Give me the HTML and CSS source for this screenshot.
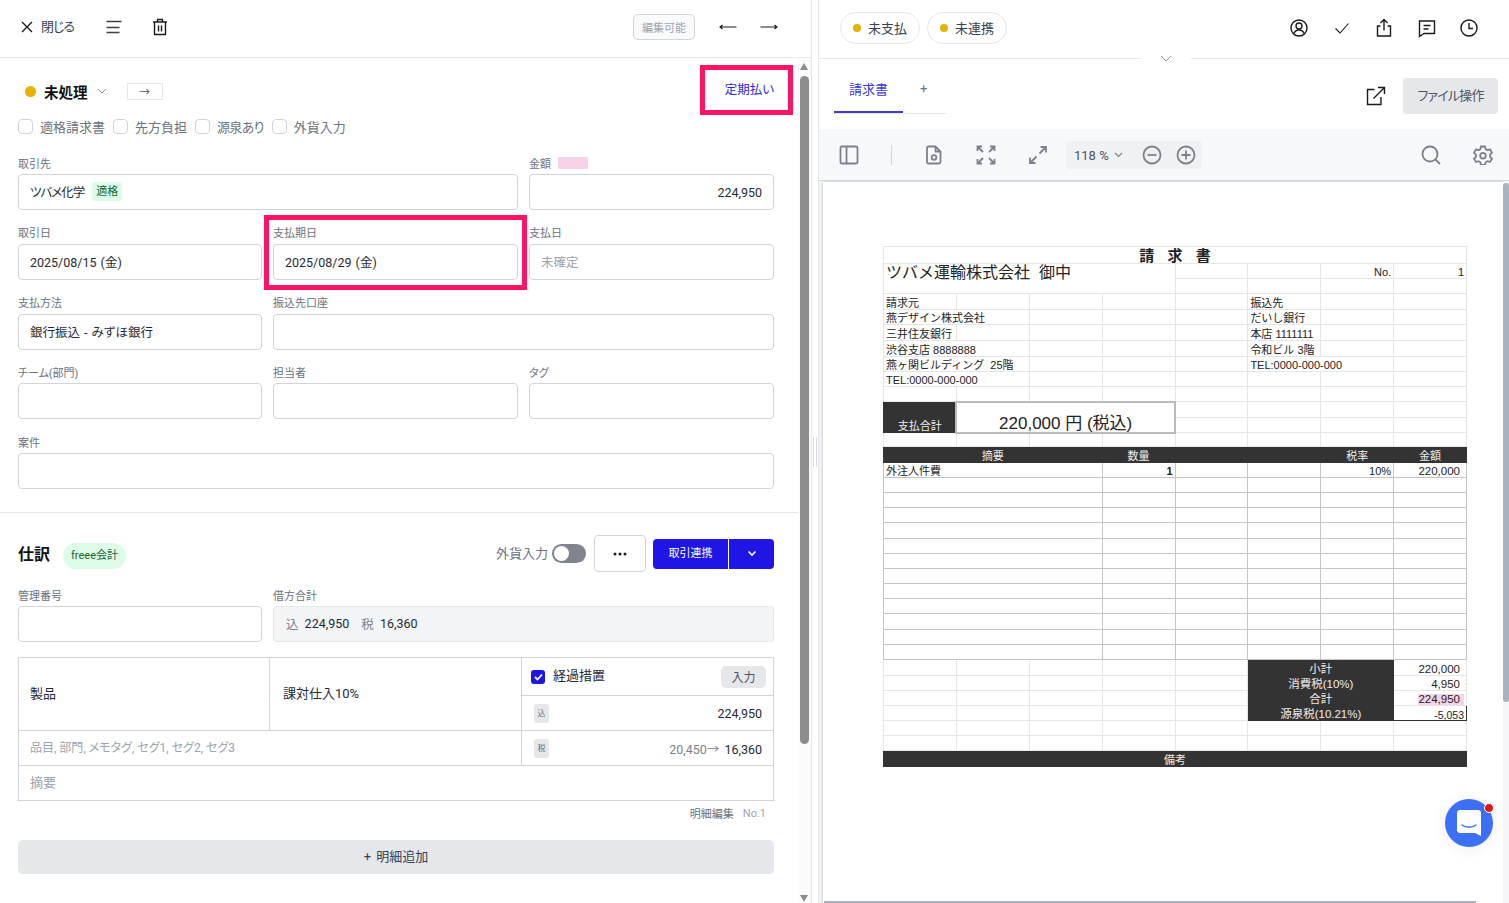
FILE: index.html
```html
<!DOCTYPE html>
<html lang="ja">
<head>
    <meta charset="UTF-8">
    <meta name="viewport" content="width=device-width, initial-scale=1.0">
    <title>請求書</title>
    <link rel="stylesheet" href="styles.css">
</head>
<body>
    <div class="app">
        <!-- left: form pane -->
        <section class="form-pane">
            <header class="form-bar">
                <button class="close-btn">
                    <svg width="14" height="14" viewBox="0 0 14 14" class="stroke-dark"><path d="M2 2l10 10M12 2L2 12"/></svg>
                    <span class="close-label">閉じる</span>
                </button>
                <svg class="lines-icon" width="16" height="14" viewBox="0 0 16 14"><path d="M0.500 1.500h15M0.500 7.500h13M0.500 12.500h13"/></svg>
                <svg class="trash-icon stroke-dark" width="16" height="18" viewBox="0 0 16 18"><path d="M1 4h14M5.500 4V1.500h5V4M2.500 4v12.500h11V4M6.500 7.500v6M9.500 7.500v6"/></svg>
                <button class="edit-btn">編集可能</button>
                <svg class="arrow-icon stroke-thin" width="18" height="8" viewBox="0 0 18 8"><path d="M17.500 4H1M3.500 2L1 4l2.500 2"/></svg>
                <svg class="arrow-icon stroke-thin" width="18" height="8" viewBox="0 0 18 8"><path d="M0.500 4H17M14.500 2L17 4l-2.500 2"/></svg>
            </header>

            <div class="form-scroll">
                <div class="form-body">
                    <div class="form-section">
                        <div class="status-row">
                            <span class="status-dot"></span>
                            <strong class="status-name">未処理</strong>
                            <svg class="stroke-gray" width="10" height="6" viewBox="0 0 10 6"><path d="M1 1l4 4 4-4"/></svg>
                            <span class="status-box">→</span>
                            <a class="recurring">定期払い</a>
                        </div>
                        <div class="check-row">
                            <label class="check"><span class="check-box"></span>適格請求書</label>
                            <label class="check"><span class="check-box"></span>先方負担</label>
                            <label class="check narrow"><span class="check-box"></span>源泉あり</label>
                            <label class="check"><span class="check-box"></span>外貨入力</label>
                        </div>

                        <div class="field-grid">
                            <div class="field span-2">
                                <div class="field-label">取引先</div>
                                <div class="input"><span class="kana">ツバメ化学</span><span class="tag">適格</span></div>
                            </div>
                            <div class="field">
                                <div class="field-label">金額<span class="pink-mark"></span></div>
                                <div class="input align-right">224,950</div>
                            </div>
                            <div class="field">
                                <div class="field-label">取引日</div>
                                <div class="input">2025/08/15 (金)</div>
                            </div>
                            <div class="field due-field">
                                <div class="field-label">支払期日</div>
                                <div class="input">2025/08/29 (金)</div>
                                <div class="highlight-due"></div>
                            </div>
                            <div class="field">
                                <div class="field-label">支払日</div>
                                <div class="input muted">未確定</div>
                            </div>
                            <div class="field">
                                <div class="field-label">支払方法</div>
                                <div class="input">銀行振込 - みずほ銀行</div>
                            </div>
                            <div class="field span-2">
                                <div class="field-label">振込先口座</div>
                                <div class="input"></div>
                            </div>
                            <div class="field">
                                <div class="field-label">チーム(部門)</div>
                                <div class="input"></div>
                            </div>
                            <div class="field">
                                <div class="field-label">担当者</div>
                                <div class="input"></div>
                            </div>
                            <div class="field">
                                <div class="field-label">タグ</div>
                                <div class="input"></div>
                            </div>
                            <div class="field span-3">
                                <div class="field-label">案件</div>
                                <div class="input"></div>
                            </div>
                        </div>
                    </div>

                    <div class="journal-section">
                        <div class="journal-head">
                            <h2 class="journal-title">仕訳</h2>
                            <span class="pill-tag">freee会計</span>
                            <span class="toggle-label">外貨入力</span>
                            <span class="toggle"><span class="toggle-knob"></span></span>
                            <button class="more-btn">
                                <svg width="14" height="4" viewBox="0 0 14 4"><circle cx="2" cy="2" r="1.500"/><circle cx="7" cy="2" r="1.500"/><circle cx="12" cy="2" r="1.500"/></svg>
                            </button>
                            <div class="link-btn">
                                <span class="link-main">取引連携</span>
                                <span class="link-drop">
                                    <svg width="10" height="7" viewBox="0 0 10 7"><path d="M1.500 1.500L5 5l3.500-3.500"/></svg>
                                </span>
                            </div>
                        </div>

                        <div class="field-grid journal-fields">
                            <div class="field">
                                <div class="field-label">管理番号</div>
                                <div class="input"></div>
                            </div>
                            <div class="field span-2">
                                <div class="field-label">借方合計</div>
                                <div class="input readonly"><span class="gray">込</span> 224,950 <span class="gray tax-gap">税</span> 16,360</div>
                            </div>
                        </div>

                        <div class="line-table">
                            <div class="cell cell-product"><span class="lift">製品</span></div>
                            <div class="cell cell-taxclass"><span class="lift">課対仕入10%</span></div>
                            <div class="cell cell-transition">
                                <span class="blue-check">
                                    <svg width="9" height="8" viewBox="0 0 9 8"><path d="M1 4l2.500 2.500L8 1.500"/></svg>
                                </span>
                                <span class="lift">経過措置</span>
                                <button class="enter-btn">入力</button>
                            </div>
                            <div class="cell cell-amount">
                                <span class="mini-badge">込</span>
                                <span class="num">224,950</span>
                            </div>
                            <div class="cell cell-items placeholder"><span class="lift">品目, 部門, メモタグ, セグ1, セグ2, セグ3</span></div>
                            <div class="cell cell-amount">
                                <span class="mini-badge">税</span>
                                <span class="num"><span class="gray">20,450</span><span class="thin-arrow">→</span> 16,360</span>
                            </div>
                            <div class="cell cell-memo placeholder"><span class="lift">摘要</span></div>
                        </div>

                        <div class="line-info">明細編集<span class="line-no">No.1</span></div>
                        <button class="add-line"><span class="lift">+ 明細追加</span></button>
                    </div>
                </div>

                <div class="scrollbar">
                    <span class="scroll-up"></span>
                    <span class="scroll-thumb"></span>
                    <span class="scroll-down"></span>
                </div>
                <div class="highlight-recurring"></div>
            </div>
        </section>

        <div class="splitter"><span class="splitter-grip"></span></div>

        <!-- right: document pane -->
        <section class="doc-pane">
            <header class="doc-bar">
                <span class="state-pill"><span class="state-dot"></span>未支払</span>
                <span class="state-pill"><span class="state-dot"></span>未連携</span>
                <div class="doc-actions">
                    <svg class="stroke-dark" width="20" height="20" viewBox="0 0 20 20"><circle cx="10" cy="10" r="8"/><circle cx="10" cy="8" r="3"/><path d="M4.800 15.500c1-2.300 2.800-3.500 5.200-3.500s4.200 1.200 5.200 3.500"/></svg>
                    <svg class="stroke-thin" width="20" height="20" viewBox="0 0 20 20"><path d="M3.500 10.500l4.500 4.500L16.500 5.500"/></svg>
                    <svg class="stroke-dark" width="20" height="20" viewBox="0 0 20 20"><path d="M10 12.500V1.500M6.500 5L10 1.500 13.500 5M6.500 8H3.500v10h13V8h-3"/></svg>
                    <svg class="stroke-dark" width="20" height="20" viewBox="0 0 20 20"><path d="M2.500 3h15v12.500H7L2.500 18.500zM6.500 7.500h7M6.500 11h5"/></svg>
                    <svg class="stroke-dark" width="20" height="20" viewBox="0 0 20 20"><circle cx="10" cy="10" r="8"/><path d="M10 5v5.500h4"/></svg>
                </div>
                <span class="collapse-notch">
                    <svg class="stroke-gray" width="12" height="7" viewBox="0 0 12 7"><path d="M1 1l5 5 5-5"/></svg>
                </span>
            </header>

            <div class="tab-row">
                <div class="tabs">
                    <span class="tab active">請求書</span>
                    <span class="tab-add">+</span>
                </div>
                <div class="tab-tools">
                    <svg class="stroke-dark" width="20" height="20" viewBox="0 0 20 20"><path d="M8.500 3.500H1.500V18.500H15V11M7.500 12.500L18.500 1.500M12 1.500h6.500V8"/></svg>
                    <button class="file-btn"><span class="lift">ファイル操作</span></button>
                </div>
            </div>

            <div class="pdf-toolbar">
                <svg class="stroke-tool tool-sidebar" width="20" height="20" viewBox="0 0 20 20"><rect x="1.500" y="1.500" width="17" height="17" rx="1.500"/><path d="M7.500 1.500v17"/></svg>
                <span class="tool-sep"></span>
                <svg class="stroke-tool tool-doc" width="20" height="20" viewBox="0 0 20 20"><path d="M4.500 1.500h7l5 5v10.500a1.500 1.500 0 0 1-1.500 1.500h-10.500a1.500 1.500 0 0 1-1.500-1.500v-14a1.500 1.500 0 0 1 1.500-1.500zM11.500 1.500v5h5"/><circle cx="10" cy="12.500" r="2.300"/></svg>
                <svg class="stroke-tool tool-fit" width="20" height="20" viewBox="0 0 20 20"><path d="M1.500 6V1.500H6M1.500 1.500L7 7M18.500 6V1.500H14M18.500 1.500L13 7M1.500 14v4.500H6M1.500 18.500L7 13M18.500 14v4.500H14M18.500 18.500L13 13"/></svg>
                <svg class="stroke-tool tool-expand" width="20" height="20" viewBox="0 0 20 20"><path d="M11.500 8.500L18 2M12.500 2H18v5.500M8.500 11.500L2 18M2 12.500V18h5.500"/></svg>
                <div class="zoom-group">
                    <span class="zoom-value">118 %</span>
                    <svg class="stroke-tool zoom-caret" width="9" height="6" viewBox="0 0 9 6"><path d="M1 1l3.500 3.500L8 1"/></svg>
                    <svg class="stroke-tool zoom-minus" width="20" height="20" viewBox="0 0 20 20"><circle cx="10" cy="10" r="8.500"/><path d="M5.500 10h9"/></svg>
                    <svg class="stroke-tool zoom-plus" width="20" height="20" viewBox="0 0 20 20"><circle cx="10" cy="10" r="8.500"/><path d="M5.500 10h9M10 5.500v9"/></svg>
                </div>
                <svg class="stroke-tool tool-search" width="20" height="20" viewBox="0 0 20 20"><circle cx="9" cy="9" r="7.500"/><path d="M14.500 14.500L19 19"/></svg>
                <svg class="stroke-tool tool-gear" width="20" height="20" viewBox="0 0 20 20"><path d="M8 1.500h4l.6 2.600 1.900 1.100 2.500-.8 2 3.400-2 1.800v2.200l2 1.800-2 3.400-2.500-.8-1.900 1.100-.6 2.600H8l-.6-2.600-1.900-1.100-2.500.8-2-3.400 2-1.800V9.600l-2-1.800 2-3.400 2.500.8 1.900-1.100z"/><circle cx="10" cy="10.700" r="2.800"/></svg>
            </div>

            <div class="pdf-view">
                <div class="pdf-page">
                    <table class="invoice">
                        <tr class="h17"><td colspan="8" class="inv-title">請 求 書</td></tr>
                        <tr><td colspan="4" rowspan="2" class="inv-to">ツバメ運輸株式会社&nbsp; 御中</td><td></td><td></td><td class="right">No.</td><td class="right">1</td></tr>
                        <tr><td></td><td></td><td></td><td></td></tr>
                        <tr class="h16"><td>請求元</td><td></td><td></td><td></td><td></td><td>振込先</td><td></td><td></td></tr>
                        <tr><td colspan="2">燕デザイン株式会社</td><td></td><td></td><td></td><td>だいし銀行</td><td></td><td></td></tr>
                        <tr class="h16"><td>三井住友銀行</td><td></td><td></td><td></td><td></td><td>本店 1111111</td><td></td><td></td></tr>
                        <tr class="h16"><td colspan="2">渋谷支店 8888888</td><td></td><td></td><td></td><td>令和ビル 3階</td><td></td><td></td></tr>
                        <tr><td colspan="2">燕ヶ関ビルディング&nbsp; 25階</td><td></td><td></td><td></td><td colspan="2">TEL:0000-000-000</td><td></td></tr>
                        <tr><td colspan="2">TEL:0000-000-000</td><td></td><td></td><td></td><td></td><td></td><td></td></tr>
                        <tr><td></td><td></td><td></td><td></td><td></td><td></td><td></td><td></td></tr>
                        <tr class="h16"><td rowspan="2" class="dark sum-label">支払合計</td><td colspan="3" rowspan="2" class="sum-value">220,000 円 (税込)</td><td></td><td></td><td></td><td></td></tr>
                        <tr><td></td><td></td><td></td><td></td></tr>
                        <tr class="h14"><td></td><td></td><td></td><td></td><td></td><td></td><td></td><td></td></tr>
                        <tr class="h16 dark-row"><td colspan="3">摘要</td><td>数量</td><td></td><td></td><td>税率</td><td>金額</td></tr>
                        <tr class="item"><td colspan="3">外注人件費</td><td class="right bold">1</td><td></td><td></td><td class="right">10%</td><td class="right pad">220,000</td></tr>
                        <tr class="item"><td colspan="3"></td><td></td><td></td><td></td><td></td><td></td></tr>
                        <tr class="item"><td colspan="3"></td><td></td><td></td><td></td><td></td><td></td></tr>
                        <tr class="item"><td colspan="3"></td><td></td><td></td><td></td><td></td><td></td></tr>
                        <tr class="item h16"><td colspan="3"></td><td></td><td></td><td></td><td></td><td></td></tr>
                        <tr class="item"><td colspan="3"></td><td></td><td></td><td></td><td></td><td></td></tr>
                        <tr class="item"><td colspan="3"></td><td></td><td></td><td></td><td></td><td></td></tr>
                        <tr class="item"><td colspan="3"></td><td></td><td></td><td></td><td></td><td></td></tr>
                        <tr class="item"><td colspan="3"></td><td></td><td></td><td></td><td></td><td></td></tr>
                        <tr class="item"><td colspan="3"></td><td></td><td></td><td></td><td></td><td></td></tr>
                        <tr class="item h16"><td colspan="3"></td><td></td><td></td><td></td><td></td><td></td></tr>
                        <tr class="item"><td colspan="3"></td><td></td><td></td><td></td><td></td><td></td></tr>
                        <tr class="item"><td colspan="3"></td><td></td><td></td><td></td><td></td><td></td></tr>
                        <tr class="h16 total-first"><td></td><td></td><td></td><td></td><td></td><td colspan="2" class="dark center">小計</td><td class="right pad">220,000</td></tr>
                        <tr><td></td><td></td><td></td><td></td><td></td><td colspan="2" class="dark center">消費税(10%)</td><td class="right pad">4,950</td></tr>
                        <tr><td></td><td></td><td></td><td></td><td></td><td colspan="2" class="dark center">合計</td><td class="right pad"><span class="pink-total">224,950</span></td></tr>
                        <tr><td></td><td></td><td></td><td></td><td></td><td colspan="2" class="dark center">源泉税(10.21%)</td><td class="right withheld">-5,053</td></tr>
                        <tr><td></td><td></td><td></td><td></td><td></td><td></td><td></td><td></td></tr>
                        <tr><td></td><td></td><td></td><td></td><td></td><td></td><td></td><td></td></tr>
                        <tr class="h16 dark-row"><td colspan="8">備考</td></tr>
                    </table>
                </div>
                <div class="pdf-vscroll"><span class="pdf-vthumb"></span></div>
                <div class="pdf-hthumb"></div>
                <button class="chat-btn">
                    <svg width="26" height="28" viewBox="0 0 26 28"><path d="M4 1h18a3 3 0 0 1 3 3v23l-6-3H4a3 3 0 0 1-3-3V4a3 3 0 0 1 3-3z" fill="#fff"/><path d="M6 16c4 3 10 3 14 0" fill="none" stroke="#3c6ff5" stroke-width="1.500" stroke-linecap="round"/></svg>
                    <span class="chat-dot"></span>
                </button>
            </div>
        </section>
    </div>
</body>
</html>
```

FILE: styles.css
```css
* {
    box-sizing: border-box;
}
html, body {
    margin: 0;
    height: 100%;
    overflow: hidden;
}
body {
    font-family: Roboto, "Noto Sans CJK JP", sans-serif;
    font-feature-settings: "palt";
    font-size: 13px;
    color: #1f2937;
    background-color: white;
}
button {
    font: inherit;
    border: none;
    background: none;
    padding: 0;
}
svg {
    display: block;
    flex: none;
    fill: none;
}
.stroke-dark {
    stroke: #1a1a1a;
    stroke-width: 1.4;
}
.stroke-thin {
    stroke: #1a1a1a;
    stroke-width: 1.1;
}
.stroke-gray {
    stroke: #8b909a;
    stroke-width: 1;
}
.stroke-tool {
    stroke: #7b818c;
    stroke-width: 1.8;
}
.gray {
    color: #7b818c;
}
.lift {
    position: relative;
    top: -2px;
}

.app {
    display: flex;
    height: 903px;
}

/* form pane */
.form-pane {
    width: 812px;
    display: flex;
    flex-direction: column;
    border-right: 1px solid #e5e7eb;
}
.form-bar {
    height: 58px;
    flex: none;
    display: flex;
    align-items: center;
    padding: 0 33px 4px 20px;
    border-bottom: 1px solid #e5e7eb;
}
.close-btn {
    display: flex;
    align-items: center;
    gap: 7px;
    color: #374151;
    font-size: 13px;
}
.close-label {
    position: relative;
    top: -1px;
    letter-spacing: -1px;
}
.lines-icon {
    margin-left: 32px;
    stroke: #3f3f46;
    stroke-width: 1.5;
}
.trash-icon {
    margin-left: 30px;
}
.edit-btn {
    margin-left: auto;
    width: 62px;
    height: 26px;
    border: 1px solid #d1d5db;
    border-radius: 5px;
    background-color: #f9fafb;
    color: #9ca3af;
    font-size: 11px;
}
.arrow-icon {
    margin-left: 24px;
}
.arrow-icon:last-child {
    margin-left: 23px;
}

.form-scroll {
    flex: 1;
    display: flex;
    position: relative;
    min-height: 0;
}
.form-body {
    width: 798px;
}
.form-section {
    padding: 16px 24px 23px 18px;
    border-bottom: 1px solid #e5e7eb;
}
.status-row {
    height: 34px;
    display: flex;
    align-items: center;
    padding-left: 7px;
}
.status-dot {
    width: 11px;
    height: 11px;
    border-radius: 50%;
    background-color: #e8b000;
}
.status-name {
    margin: 0 9px 0 8px;
    font-size: 14.500px;
    color: #111;
}
.status-box {
    width: 36px;
    height: 17px;
    margin-left: 20px;
    border: 1px solid #e5e7eb;
    text-align: center;
    line-height: 15px;
    font-family: "Noto Sans CJK JP", sans-serif;
    font-feature-settings: normal;
    font-size: 11px;
    color: #4b5563;
}
.recurring {
    margin-left: auto;
    margin-bottom: 5px;
    color: #2a1fe0;
    font-size: 12.500px;
}
.check-row {
    display: flex;
    gap: 8px;
    height: 18px;
    margin-top: 9px;
}
.check {
    display: flex;
    align-items: center;
    gap: 7px;
    color: #6b7280;
    font-size: 13px;
}
.check.narrow {
    letter-spacing: -0.700px;
}
.check-box {
    width: 15px;
    height: 15px;
    border: 1px solid #d1d5db;
    border-radius: 4px;
}
.field-grid {
    display: grid;
    grid-template-columns: 244px 245px 245px;
    column-gap: 11px;
    row-gap: 15.700px;
    margin-top: 21.300px;
}
.field {
    position: relative;
}
.span-2 {
    grid-column: span 2;
}
.span-3 {
    grid-column: span 3;
}
.field-label {
    display: flex;
    align-items: center;
    height: 18px;
    padding-bottom: 5px;
    color: #6b7280;
    font-size: 11px;
}
.pink-mark {
    width: 30px;
    height: 12px;
    margin-left: 7px;
    background-color: #f7d3ea;
}
.input {
    height: 36px;
    display: flex;
    align-items: center;
    padding: 0 11px 1px;
    border: 1px solid #d1d5db;
    border-radius: 4px;
    background-color: white;
    color: #1f2937;
    font-size: 12.500px;
    word-spacing: 1px;
}
.align-right {
    justify-content: flex-end;
    padding-bottom: 0;
}
.muted {
    color: #9ca3af;
}
.kana {
    letter-spacing: -1px;
}
.tag {
    margin-left: 8px;
    padding: 2px 4px;
    border-radius: 3px;
    background-color: #dcfce7;
    color: #166534;
    font-size: 11px;
    line-height: 15px;
}
.highlight-due {
    position: absolute;
    top: -11px;
    left: -9px;
    right: -9px;
    bottom: -10px;
    border: 5px solid #ff1464;
}
.highlight-recurring {
    position: absolute;
    left: 700px;
    top: 7px;
    width: 93px;
    height: 50px;
    border: 5px solid #ff1464;
}

.journal-section {
    padding: 22px 24px 0 18px;
}
.journal-head {
    display: flex;
    align-items: center;
    height: 37px;
}
.journal-title {
    margin: 0 0 2px;
    font-size: 16px;
    color: #111;
}
.pill-tag {
    margin: 4px 0 0 13px;
    width: 63px;
    height: 26px;
    border-radius: 13px;
    background-color: #dcfce7;
    color: #166534;
    font-size: 11px;
    line-height: 25px;
    text-align: center;
}
.toggle-label {
    margin: 0 0 2px auto;
    color: #6b7280;
}
.toggle {
    width: 34px;
    height: 19px;
    margin-left: 4px;
    padding: 2px;
    border-radius: 10px;
    background-color: #80848f;
}
.toggle-knob {
    display: block;
    width: 15px;
    height: 15px;
    border-radius: 50%;
    background-color: white;
}
.more-btn {
    width: 52px;
    height: 37px;
    margin-left: 8px;
    display: flex;
    align-items: center;
    justify-content: center;
    border: 1px solid #d1d5db;
    border-radius: 4px;
}
.more-btn svg {
    fill: #1a1a1a;
}
.link-btn {
    display: flex;
    height: 30px;
    margin-left: 7px;
    border-radius: 4px;
    overflow: hidden;
    color: white;
    font-size: 11px;
    background-color: #1f16e6;
}
.link-main {
    width: 76px;
    line-height: 29px;
    text-align: center;
    border-right: 1px solid white;
}
.link-drop {
    width: 45px;
    display: flex;
    align-items: center;
    justify-content: center;
}
.link-drop svg {
    stroke: white;
    stroke-width: 1.6;
}
.journal-fields {
    margin-top: 16px;
}
.readonly {
    padding-left: 12px;
    background-color: #f3f4f6;
    border-color: #e5e7eb;
    color: #1f2937;
    white-space: pre;
    word-spacing: 3px;
}
.tax-gap {
    margin-left: 6px;
}
.line-table {
    display: grid;
    grid-template-columns: 251px 252px 1fr;
    grid-template-rows: 38px 35px 35px 35px;
    margin-top: 15px;
    border: 1px solid #d1d5db;
    border-bottom: none;
}
.cell {
    display: flex;
    align-items: center;
    padding: 0 11px;
    border-bottom: 1px solid #d1d5db;
    border-right: 1px solid #d1d5db;
}
.cell-product {
    grid-row: span 2;
}
.cell-taxclass {
    grid-row: span 2;
    padding-left: 13px;
}
.cell-transition {
    border-right: none;
    padding: 0 7px 0 9px;
    gap: 8px;
}
.cell-amount {
    grid-column: 3;
    border-right: none;
    justify-content: space-between;
    padding: 0 11px 0 12px;
}
.cell-items {
    grid-column: span 2;
    font-size: 12px;
}
.cell-memo {
    grid-column: span 3;
    border-right: none;
}
.placeholder {
    color: #9ca3af;
}
.num {
    font-size: 12.500px;
}
.thin-arrow {
    margin-right: 2px;
    font-family: "Noto Sans CJK JP", sans-serif;
    font-feature-settings: normal;
    color: #7b818c;
}
.blue-check {
    width: 14px;
    height: 14px;
    display: flex;
    align-items: center;
    justify-content: center;
    border-radius: 3px;
    background-color: #1f16e6;
}
.blue-check svg {
    stroke: white;
    stroke-width: 1.8;
}
.enter-btn {
    margin-left: auto;
    width: 45px;
    height: 22px;
    border-radius: 5px;
    background-color: #e5e7eb;
    color: #4b5563;
    font-size: 12px;
}
.mini-badge {
    width: 15px;
    height: 19px;
    border-radius: 3px;
    background-color: #e5e7eb;
    color: #6b7280;
    font-size: 8px;
    line-height: 19px;
    text-align: center;
}
.line-info {
    height: 24px;
    padding-right: 8px;
    display: flex;
    align-items: center;
    justify-content: flex-end;
    color: #6b7280;
    font-size: 11px;
}
.line-no {
    margin-left: 9px;
    color: #9ca3af;
}
.add-line {
    display: block;
    width: 100%;
    height: 34px;
    margin-top: 15px;
    border-radius: 5px;
    background-color: #e5e7eb;
    color: #374151;
    word-spacing: 2px;
}

.scrollbar {
    position: relative;
    width: 13px;
    background-color: #fbfbfb;
}
.scroll-thumb {
    position: absolute;
    left: 2px;
    top: 18px;
    width: 9px;
    height: 668px;
    border-radius: 5px;
    background-color: #8c8c8c;
}
.scroll-up, .scroll-down {
    position: absolute;
    left: 2px;
    border-left: 4.500px solid transparent;
    border-right: 4.500px solid transparent;
}
.scroll-up {
    top: 5px;
    border-bottom: 7px solid #8c8c8c;
}
.scroll-down {
    bottom: 1px;
    border-top: 7px solid #8c8c8c;
}

.splitter {
    width: 6px;
    display: flex;
    align-items: center;
    justify-content: center;
}
.splitter-grip {
    width: 4px;
    height: 30px;
    border-left: 1px solid #d9dbe0;
    border-right: 1px solid #d9dbe0;
}

/* document pane */
.doc-pane {
    flex: 1;
    min-width: 0;
    display: flex;
    flex-direction: column;
    border-left: 1px solid #e5e7eb;
}
.doc-bar {
    position: relative;
    height: 59px;
    flex: none;
    display: flex;
    align-items: center;
    gap: 7px;
    padding: 0 30px 3px 21px;
    border-bottom: 1px solid #e5e7eb;
}
.state-pill {
    display: flex;
    align-items: center;
    gap: 7px;
    height: 32px;
    padding: 0 12px;
    border: 1px solid #e5e7eb;
    border-radius: 16px;
    color: #374151;
}
.state-dot {
    width: 8px;
    height: 8px;
    border-radius: 50%;
    background-color: #e8b000;
}
.doc-actions {
    margin-left: auto;
    display: flex;
    gap: 22.500px;
}
.collapse-notch {
    position: absolute;
    left: 322px;
    bottom: -5px;
    width: 50px;
    height: 9px;
    display: flex;
    align-items: center;
    justify-content: center;
    background-color: white;
}
.tab-row {
    height: 70px;
    flex: none;
    display: flex;
    justify-content: space-between;
    padding: 8px 11px 0 15px;
}
.tabs {
    display: flex;
    width: 112px;
    height: 47px;
    border-bottom: 1px solid #e5e7eb;
}
.tab {
    width: 69px;
    height: 46px;
    line-height: 46px;
    text-align: center;
}
.tab.active {
    color: #3f37d8;
    border-bottom: 2px solid #3f37d8;
}
.tab-add {
    margin-left: 17px;
    line-height: 44px;
    color: #6b7280;
}
.tab-tools {
    display: flex;
    align-items: center;
    gap: 17px;
    height: 36px;
    margin-top: 11px;
}
.file-btn {
    width: 95px;
    height: 36px;
    border-radius: 4px;
    background-color: #e5e7eb;
    color: #4b5563;
    letter-spacing: -0.800px;
}
.pdf-toolbar {
    height: 52px;
    flex: none;
    display: flex;
    align-items: center;
    padding: 1px 16px 0 20px;
    background-color: #f7f8fa;
    border-bottom: 1px solid #d5d7dc;
}
.tool-sep {
    width: 1px;
    height: 20px;
    margin-left: 32px;
    background-color: #d1d5db;
}
.tool-doc {
    margin-left: 32px;
}
.tool-fit, .tool-expand {
    margin-left: 32px;
}
.zoom-group {
    display: flex;
    align-items: center;
    width: 136px;
    height: 28px;
    margin-left: 18px;
    padding-left: 8px;
    border-radius: 4px;
    background-color: #f0f1f3;
}
.zoom-value {
    color: #4b5563;
}
.zoom-caret {
    margin-left: 5px;
    stroke-width: 1.2;
}
.zoom-minus {
    margin-left: 19px;
}
.zoom-plus {
    margin-left: 14px;
}
.tool-search {
    margin-left: auto;
}
.tool-gear {
    margin-left: 32px;
}

.pdf-view {
    position: relative;
    flex: 1;
    min-height: 0;
    overflow: hidden;
    background-color: #f3f4f6;
}
.pdf-page {
    height: 100%;
    margin: 1px 0 0 4px;
    padding: 64px 0 0 60px;
    background-color: white;
    box-shadow: 0 0 3px rgba(0,0,0,0.25);
}
.invoice {
    width: 584px;
    table-layout: fixed;
    border-collapse: collapse;
    font-family: "Liberation Sans", "Noto Sans CJK JP", sans-serif;
    font-feature-settings: normal;
    font-size: 11px;
    color: #222;
}
.invoice tr {
    height: 15px;
}
.invoice tr.h14 {
    height: 14px;
}
.invoice tr.h16 {
    height: 16px;
}
.invoice tr.h17 {
    height: 17px;
}
.invoice td {
    padding: 0 2px;
    border: 1px solid #e6e6e6;
    line-height: 1;
    white-space: nowrap;
    overflow: hidden;
    vertical-align: bottom;
}
.invoice td.inv-title {
    text-align: center;
    font-size: 15px;
    font-weight: bold;
    word-spacing: 9px;
}
.invoice td.inv-to {
    vertical-align: top;
    padding-top: 1px;
    font-size: 16px;
}
.right {
    text-align: right;
}
.bold {
    font-weight: bold;
}
.invoice td.center {
    text-align: center;
    font-size: 11.500px;
}
.invoice td.pad {
    padding-right: 6px;
    font-size: 11.500px;
}
.invoice td.dark, .dark-row td {
    background-color: #333;
    border-color: #333;
    color: #eee;
}
.dark-row td {
    text-align: center;
}
.sum-label {
    text-align: center;
}
.invoice td.sum-value {
    border: 2px solid #bbb;
    text-align: center;
    font-size: 17px;
}
.item td {
    border-color: #c4c4c4;
}
.total-first td {
    border-top-color: #aaa;
}
.pink-total {
    display: block;
    margin: 0 -4px 0 22px;
    padding-right: 4px;
    background-color: #f7d3ea;
}
.invoice td.withheld {
    border: 1px solid #333;
    font-size: 10.500px;
}
.pdf-vscroll {
    position: absolute;
    top: 0;
    right: 0;
    bottom: 0;
    width: 6px;
    background-color: #f5f5f7;
}
.pdf-vthumb {
    display: block;
    height: 519px;
    margin-top: 2px;
    border-radius: 3px;
    background-color: #a9b2bd;
}
.pdf-hthumb {
    position: absolute;
    left: 5px;
    bottom: 0;
    width: 652px;
    height: 2px;
    background-color: #a9b2bd;
}
.chat-btn {
    position: absolute;
    right: 16px;
    bottom: 56px;
    width: 48px;
    height: 48px;
    display: flex;
    align-items: center;
    justify-content: center;
    border-radius: 50%;
    background-color: #3c6ff5;
    box-shadow: 0 2px 14px rgba(0,0,0,0.08);
}
.chat-dot {
    position: absolute;
    top: 4px;
    right: -1px;
    width: 10px;
    height: 10px;
    border: 1px solid white;
    border-radius: 50%;
    background-color: #e01515;
}
```
